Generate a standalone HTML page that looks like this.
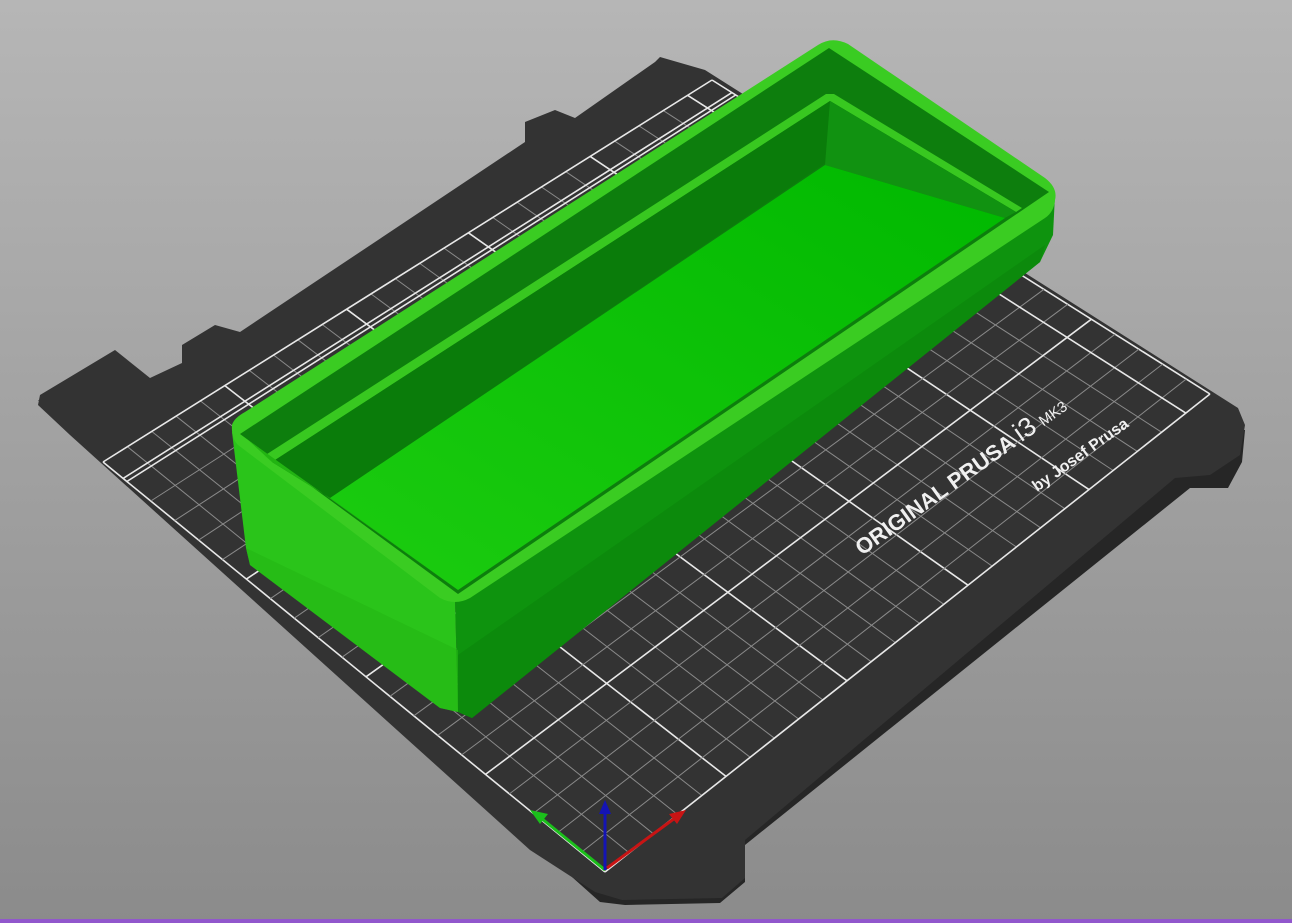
<!DOCTYPE html>
<html><head><meta charset="utf-8"><style>
html,body{margin:0;padding:0;width:1292px;height:923px;overflow:hidden;}
body{background:linear-gradient(#b6b6b6,#8b8b8b);}
svg{position:absolute;left:0;top:0;}
</style></head><body>
<svg id="s" width="1292" height="923" viewBox="0 0 1292 923" xmlns="http://www.w3.org/2000/svg">
<defs>
<linearGradient id="fl" x1="0" y1="1" x2="1" y2="0"><stop offset="0" stop-color="#1ccc10"/><stop offset="1" stop-color="#00b800"/></linearGradient>
</defs>
<polygon points="38,400 600,902 625,905 720,903 745,882 745,845 1190,488 1228,488 1242,462 1245,430" fill="#262626"/>
<polygon fill="#333333" points="660,57 705,70 1238,408 1245,425 1240,455 1210,475 1175,478 745,840 745,878 722,898 622,900 595,892 530,850 70,435 38,405 40,395 115,350 150,378 182,363 182,345 215,325 240,332 525,142 525,122 555,110 575,118 655,62"/>
<g id="grid"></g>
<!-- box front-right face -->
<polygon points="455,600 1055,195 1053,235 1040,262 472,718 458,712" fill="#0e930e"/>
<polygon points="458,655 1045,245 1040,262 472,718 458,712" fill="#0c8a0c"/>
<!-- box front-left face -->
<polygon points="232,432 455,600 458,712 440,708 250,565 246,548" fill="#2ac41a"/>
<polygon points="246,548 250,565 440,708 458,712 458,650" fill="#24b814" opacity="0.6"/>
<!-- rim -->
<path d="M232,425 Q234,418 245,412 L818,45 Q832,36 848,44 L1045,178 Q1058,188 1055,200 Q1054,212 1045,218 L470,598 Q455,606 440,598 L238,445 Q231,438 232,425 Z" fill="#3acc22"/>
<!-- interior opening -->
<polygon points="240,434 829,48 1049,192 458,594" fill="#0d7e0d"/>
<!-- divider top -->
<polygon points="264,456 826,94 834,94 1022,208 1016,212 830,101 272,462" fill="#38c820"/>
<!-- main compartment back wall -->
<polygon points="272,462 830,101 1016,212 1005,218 825,163 330,498" fill="#0a7c0a"/>
<polygon points="830,101 1016,212 1005,218 825,165" fill="#119211"/>
<!-- left end wall -->
<polygon points="272,462 330,498 458,590 248,440" fill="#22b412"/>
<!-- floor -->
<polygon points="330,498 825,165 1005,218 458,590" fill="url(#fl)"/>
<!-- axes -->
<line x1="605" y1="870" x2="541" y2="818" stroke="#1bbf1b" stroke-width="3"/>
<polygon points="530,810 548,814 540,824" fill="#1bbf1b"/>
<line x1="605" y1="870" x2="605" y2="810" stroke="#1414b4" stroke-width="3"/>
<polygon points="605,800 599,814 611,814" fill="#1414b4"/>
<line x1="607" y1="868" x2="675" y2="818" stroke="#c81414" stroke-width="3"/>
<polygon points="686,810 669,814 677,824" fill="#c81414"/>
<text transform="translate(862,556) rotate(-35.5)" font-family="Liberation Sans, sans-serif" font-size="22" font-weight="bold" fill="#f0f0f0">ORIGINAL PRUSA <tspan font-size="27" font-weight="normal">i3</tspan> <tspan font-size="15" font-weight="normal">MK3</tspan></text>
<text transform="translate(1037,492) rotate(-35.5)" font-family="Liberation Sans, sans-serif" font-size="16" font-weight="bold" fill="#f0f0f0">by Josef Prusa</text>
<rect x="0" y="919" width="1292" height="4" fill="#9157cc"/>
</svg>
<script>
(function(){
var O=[605,872],X=[1210,394],Y=[103,462],XY=[712,80];
function P(u,v){return [O[0]*(1-u)*(1-v)+X[0]*u*(1-v)+Y[0]*(1-u)*v+XY[0]*u*v,O[1]*(1-u)*(1-v)+X[1]*u*(1-v)+Y[1]*(1-u)*v+XY[1]*u*v];}
var g=document.getElementById('grid'),s='';
function L(a,b,c,w){s+='<line x1="'+a[0].toFixed(1)+'" y1="'+a[1].toFixed(1)+'" x2="'+b[0].toFixed(1)+'" y2="'+b[1].toFixed(1)+'" stroke="'+c+'" stroke-width="'+w+'"/>';}
for(var i=0;i<=25;i++){var u=i/25;var maj=(i%5==0);L(P(u,0),P(u,1),maj?'#e8e8e8':'#8a8a8a',maj?1.6:1);}
for(var j=0;j<=21;j++){var v=j/21;var maj=(j%5==0)||j==21;L(P(0,v),P(1,v),maj?'#e8e8e8':'#8a8a8a',maj?1.6:1);}
L(P(0,0.96),P(1,0.96),'#e8e8e8',1.6);L(P(0.96,0),P(0.96,1),'#e8e8e8',1.6);
g.innerHTML=s;
})();
</script>
</body></html>
